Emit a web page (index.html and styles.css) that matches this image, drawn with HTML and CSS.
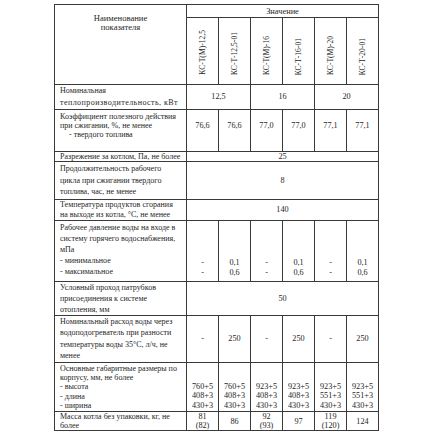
FILE: index.html
```html
<!DOCTYPE html>
<html lang="ru">
<head>
<meta charset="utf-8">
<title>Технические характеристики</title>
<link rel="stylesheet" href="styles.css">
</head>
<body>
<div class="sheet">
<table class="spec">
<colgroup><col class="c-name"><col class="c-val"><col class="c-val"><col class="c-val"><col class="c-val"><col class="c-val"><col class="c-val"></colgroup>
<thead>
<tr class="h1"><th class="name-h" rowspan="2">Наименование<br>показателя</th><th colspan="6" class="val-h">Значение</th></tr>
<tr class="h2">
<th class="vert"><span>КС-Т(М)-12,5</span></th>
<th class="vert"><span>КС-Т-12,5-01</span></th>
<th class="vert"><span>КС-Т(М)-16</span></th>
<th class="vert"><span>КС-Т-16-01</span></th>
<th class="vert"><span>КС-Т(М)-20</span></th>
<th class="vert"><span>КС-Т-20-01</span></th>
</tr>
</thead>
<tbody>
<tr class="r1"><td class="name">Номинальная<br><span class="wide">теплопроизводительность, кВт</span></td><td colspan="2">12,5</td><td colspan="2">16</td><td colspan="2">20</td></tr>
<tr class="r2"><td class="name">Коэффициент полезного действия<br>при сжигании, %, не менее<br><span class="ind">- твердого топлива</span></td><td>76,6</td><td>76,6</td><td>77,0</td><td>77,0</td><td>77,1</td><td>77,1</td></tr>
<tr class="r3"><td class="name">Разрежение за котлом, Па, не более</td><td colspan="6">25</td></tr>
<tr class="r4"><td class="name">Продолжительность рабочего<br>цикла при сжигании твердого<br>топлива, час, не менее</td><td colspan="6">8</td></tr>
<tr class="r5"><td class="name">Температура продуктов сгорания<br>на выходе из котла, °С, не менее</td><td colspan="6">140</td></tr>
<tr class="r6"><td class="name">Рабочее давление воды на входе в<br>систему горячего водоснабжения,<br>мПа<br>- минимальное<br>- максимальное</td><td>-<br>-</td><td>0,1<br>0,6</td><td>-<br>-</td><td>0,1<br>0,6</td><td>-<br>-</td><td>0,1<br>0,6</td></tr>
<tr class="r7"><td class="name">Условный проход патрубков<br>присоединения к системе<br>отопления, мм</td><td colspan="6">50</td></tr>
<tr class="r8"><td class="name">Номинальный расход воды через<br>водоподогреватель при разности<br>температуры воды 35°С, л/ч, не<br>менее</td><td>-</td><td>250</td><td>-</td><td>250</td><td>-</td><td>250</td></tr>
<tr class="r9"><td class="name">Основные габаритные размеры по<br>корпусу, мм, не более<br>- высота<br>- длина<br>- ширина</td><td>760+5<br>408+3<br>430+3</td><td>760+5<br>408+3<br>430+3</td><td>923+5<br>408+3<br>430+3</td><td>923+5<br>408+3<br>430+3</td><td>923+5<br>551+3<br>430+3</td><td>923+5<br>551+3<br>430+3</td></tr>
<tr class="r10"><td class="name">Масса котла без упаковки, кг, не<br>более</td><td>81<br>(82)</td><td>86</td><td>92<br>(93)</td><td>97</td><td>119<br>(120)</td><td>124</td></tr>
</tbody>
</table>
</div>
</body>
</html>
```
FILE: styles.css
```css
html, body {
  margin: 0;
  padding: 0;
  background: #ffffff;
}
.sheet {
  padding: 4px 0 0 54px;
}
.spec {
  border-collapse: collapse;
  table-layout: fixed;
  width: 325px;
  font-family: "Liberation Serif", "Times New Roman", serif;
  color: #262626;
}
.c-name { width: 132px; }
.c-val { width: 32px; }
.spec th, .spec td {
  border: 1px solid #3a3a3a;
  padding: 0;
  font-weight: normal;
  white-space: nowrap;
  text-align: center;
  vertical-align: middle;
  font-size: 8.2px;
  line-height: 10px;
}
.spec td.name {
  text-align: left;
  vertical-align: top;
  padding-left: 5px;
  font-size: 8px;
}
.wide { letter-spacing: 0.45px; }
.ind { padding-left: 9px; }
.spec th.name-h {
  vertical-align: top;
  padding-top: 9px;
  font-size: 8.6px;
  line-height: 9px;
}
.h1 { height: 13px; }
.spec th.val-h { font-size: 8.4px; line-height: 11px; }
.h2 { height: 67px; }
.spec th.vert { vertical-align: bottom; padding-bottom: 6px; }
.vert span {
  display: inline-block;
  writing-mode: vertical-rl;
  transform: rotate(180deg);
  font-size: 7.6px;
  line-height: 9px;
}
.r1 { height: 24px; }
.r1 td.name { line-height: 12px; padding-top: 0; }
.r2 { height: 42px; }
.r2 td.name { line-height: 9px; padding-top: 2px; }
.r2 td { vertical-align: top; padding-top: 11px; }
.r3 { height: 10px; }
.r3 td, .r3 td.name { line-height: 9px; vertical-align: middle; }
.r4 { height: 38px; }
.r4 td.name { line-height: 11.5px; padding-top: 1px; }
.r5 { height: 21px; }
.r5 td.name { line-height: 10px; padding-top: 0; }
.r6 { height: 61px; }
.r6 td.name { line-height: 11px; padding-top: 1px; }
.r6 td { vertical-align: bottom; line-height: 10px; padding-bottom: 3px; }
.r7 { height: 34px; }
.r7 td.name { line-height: 11px; padding-top: 0; }
.r8 { height: 47px; }
.r8 td.name { line-height: 11.3px; padding-top: 0; }
.r9 { height: 47px; }
.r9 td.name { line-height: 9.2px; padding-top: 1px; }
.r9 td { vertical-align: bottom; line-height: 9.4px; padding-bottom: 1px; }
.r10 { height: 19px; }
.r10 td.name { line-height: 9px; padding-top: 0; }
.r10 td { line-height: 9px; }
```
